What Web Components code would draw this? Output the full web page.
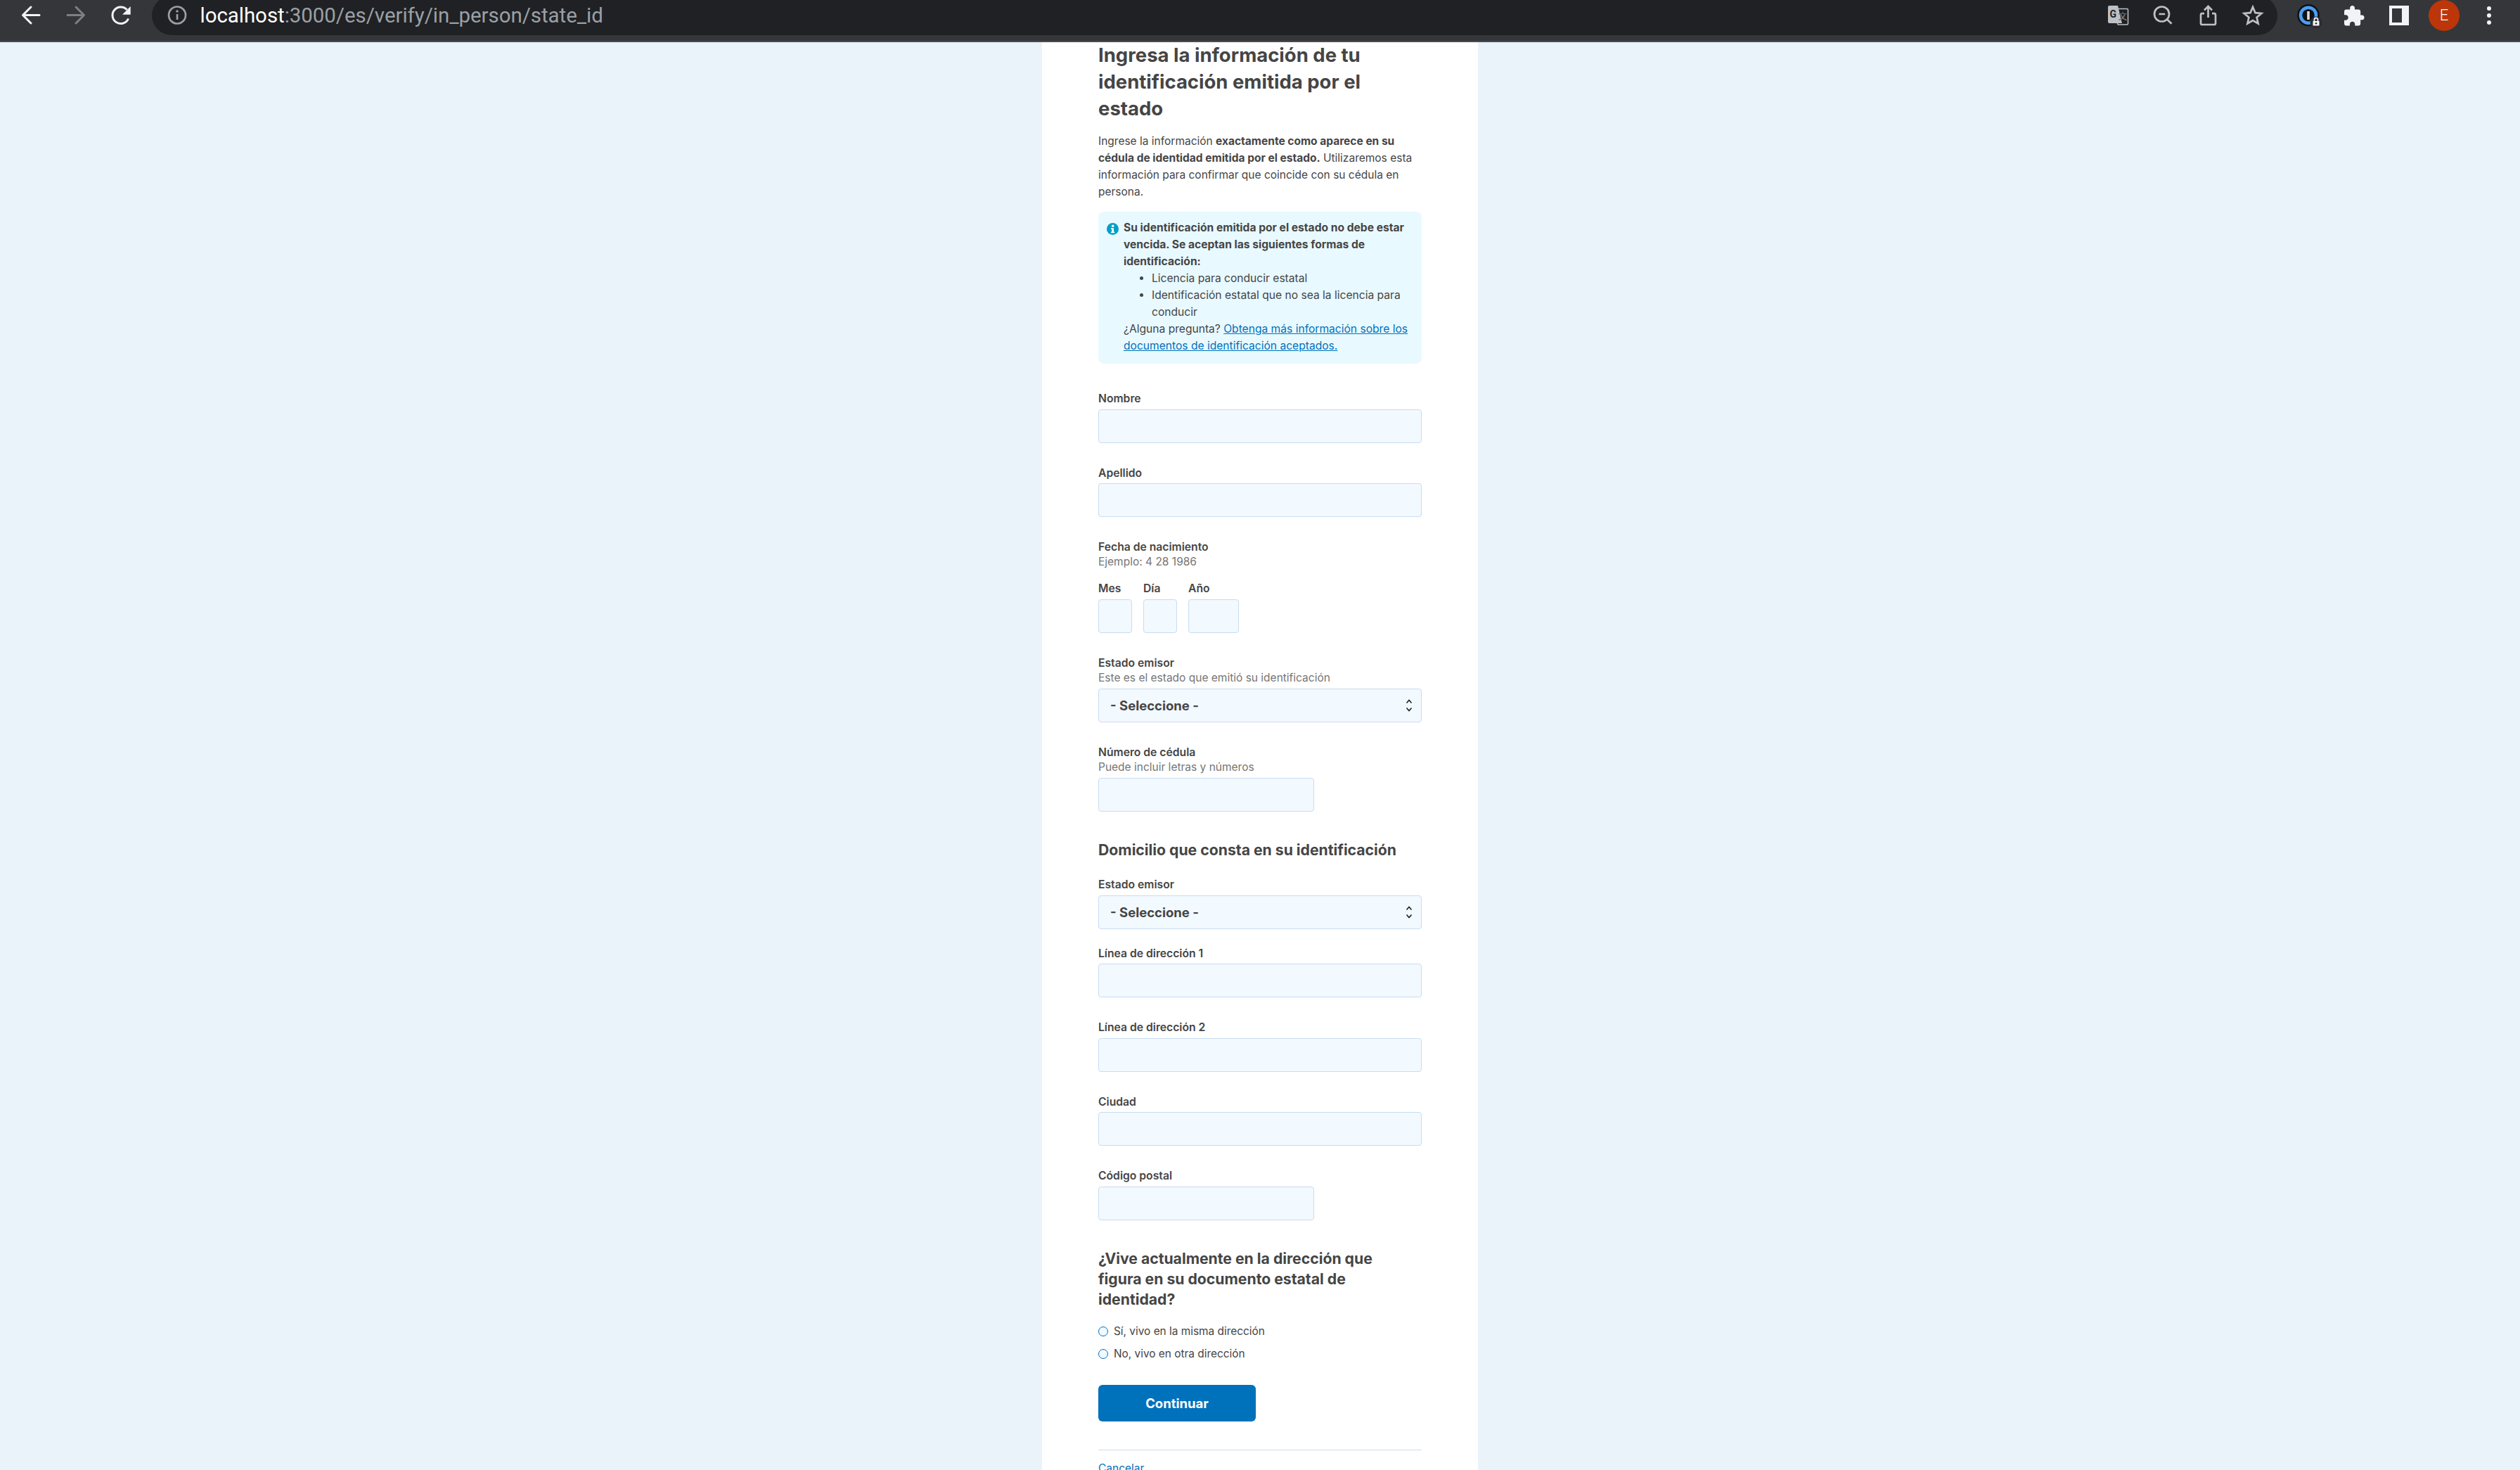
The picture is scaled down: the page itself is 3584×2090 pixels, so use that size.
<!DOCTYPE html>
<html lang="es">
<head>
<meta charset="utf-8">
<title>state_id</title>
<style>
  html, body { margin: 0; height: 2090px; overflow: hidden; }
  body { background: #eaf2fa; font-family: Inter, "Liberation Sans", sans-serif; color: #454545; }
</style>
</head>
<body>
<browser-bar url-host="localhost" url-path=":3000/es/verify/in_person/state_id"></browser-bar>
<id-page>
  <h-title>Ingresa la información de tu identificación emitida por el estado</h-title>
  <intro-text>Ingrese la información <b>exactamente como aparece en su cédula de identidad emitida por el estado.</b> Utilizaremos esta información para confirmar que coincide con su cédula en persona.</intro-text>
  <info-alert>
    <b>Su identificación emitida por el estado no debe estar vencida. Se aceptan las siguientes formas de identificación:</b>
    <ul style="margin:0;padding:0 0 0 40px">
      <li>Licencia para conducir estatal</li>
      <li>Identificación estatal que no sea la licencia para conducir</li>
    </ul>
    ¿Alguna pregunta? <a href="#" style="color:#0071bb">Obtenga más información sobre los documentos de identificación aceptados.</a>
  </info-alert>
  <form-field label="Nombre" style="margin-top:40px"></form-field>
  <form-field label="Apellido"></form-field>
  <date-field label="Fecha de nacimiento" hint="Ejemplo: 4 28 1986"></date-field>
  <form-field label="Estado emisor" hint="Este es el estado que emitió su identificación" kind="select"></form-field>
  <form-field label="Número de cédula" hint="Puede incluir letras y números" short></form-field>
  <section-title style="margin-top:40px">Domicilio que consta en su identificación</section-title>
  <form-field label="Estado emisor" kind="select" style="margin-top:25px"></form-field>
  <form-field label="Línea de dirección 1" style="margin-top:25px"></form-field>
  <form-field label="Línea de dirección 2"></form-field>
  <form-field label="Ciudad"></form-field>
  <form-field label="Código postal" short></form-field>
  <section-title style="margin-top:40px;max-width:440px">¿Vive actualmente en la dirección que figura en su documento estatal de identidad?</section-title>
  <radio-row style="margin-top:14px">Sí, vivo en la misma dirección</radio-row>
  <radio-row>No, vivo en otra dirección</radio-row>
  <main-button>Continuar</main-button>
  <page-footer>Cancelar</page-footer>
</id-page>

<script>
class BrowserBar extends HTMLElement {
  constructor() {
    super();
    this.attachShadow({ mode: "open" });
    const host = this.getAttribute("url-host");
    const path = this.getAttribute("url-path");
    this.shadowRoot.innerHTML = `
    <style>
      :host {
        display: flex;
        align-items: flex-start;
        height: 58px;
        background: #35363a;
        border-bottom: 2px solid #4b4c50;
        padding: 0 12px 0 11px;
        overflow: hidden;
      }
      .slot {
        width: 64px;
        height: 44px;
        flex: none;
        display: flex;
        align-items: center;
        justify-content: center;
      }
      svg { display: block; }
      .omni {
        flex: 1;
        height: 56px;
        margin: -6px 13px 0 13px;
        padding: 6px 3.5px 0 19px;
        box-sizing: border-box;
        border-radius: 28px;
        background: #202124;
        display: flex;
        align-items: flex-start;
      }
      .info { width: 34px; }
      .url {
        margin-left: 15.500px;
        height: 44px;
        font: 400 29.400px/44px Roboto, sans-serif;
        color: #9aa0a6;
        white-space: nowrap;
      }
      .url b { font-weight: 400; color: #fff; }
      .spacer { flex: 1; }
      .avatar {
        width: 44px;
        height: 44px;
        border-radius: 50%;
        background: #bc360a;
        color: #fff;
        font: 300 22px/44px Roboto, sans-serif;
        text-align: center;
      }
    </style>
    <div class="slot"><svg width="64" height="44" viewBox="0 0 64 44" fill="none" stroke="#f1f3f4" stroke-width="3" stroke-linecap="round" stroke-linejoin="round"><path d="M45 21.500H22M33 10 21.500 21.500 33 33"/></svg></div>
    <div class="slot"><svg width="64" height="44" viewBox="0 0 64 44" fill="none" stroke="#7e7f82" stroke-width="3" stroke-linecap="round" stroke-linejoin="round"><path d="M21 21.500h23M33 10l11.500 11.500L33 33"/></svg></div>
    <div class="slot"><svg width="64" height="44" viewBox="0 0 64 44" fill="none" stroke="#f1f3f4" stroke-width="3"><path d="M43.600 26.500A11.800 11.800 0 1 1 41.500 13.800"/><path d="M46.700 9v11.700H35z" fill="#f1f3f4" stroke="none"/></svg></div>
    <div class="omni">
      <div class="slot info"><svg width="30" height="30" viewBox="0 0 30 30" fill="none" stroke="#9aa0a6" stroke-width="2.700"><circle cx="15" cy="14.500" r="12"/><path d="M15 13v8"/><circle cx="15" cy="9" r="1.800" fill="#9aa0a6" stroke="none"/></svg></div>
      <div class="url"><b>${host}</b>${path}</div>
      <div class="spacer"></div>
      <div class="slot"><svg width="64" height="44" viewBox="0 0 64 44"><rect x="31.500" y="12.500" width="15" height="22.500" rx="1.500" fill="none" stroke="#bdc1c6" stroke-width="1.500"/><path d="M20 8h12l6 25H20a2 2 0 0 1-2-2V10a2 2 0 0 1 2-2z" fill="#bdc1c6"/><text x="20.500" y="25" font-family="Roboto" font-weight="700" font-size="14" fill="#202124">G</text><text x="33" y="28" font-family="Noto Sans CJK SC" font-size="12" fill="#bdc1c6" stroke="#202124" stroke-width=".3">文</text></svg></div>
      <div class="slot"><svg width="64" height="44" viewBox="0 0 64 44" fill="none" stroke="#bdc1c6" stroke-width="2.700"><circle cx="30.500" cy="20" r="10.500"/><path d="M26.500 20h8.700M38.300 27.800l6.200 5.900"/></svg></div>
      <div class="slot"><svg width="64" height="44" viewBox="0 0 64 44" fill="none" stroke="#bdc1c6" stroke-width="2.700"><path d="M32.500 25V9.500M27 14.500l5.500-5.500 5.500 5.500M27 19.200h-3a2 2 0 0 0-2 2V33a2 2 0 0 0 2 2h17a2 2 0 0 0 2-2V21.200a2 2 0 0 0-2-2h-3"/></svg></div>
      <div class="slot"><svg width="64" height="44" viewBox="0 0 64 44" fill="none" stroke="#bdc1c6" stroke-width="2.700"><path d="M32 10l3.500 8.200 8.900.8-6.800 5.800 2 8.700L32 29l-7.600 4.500 2-8.700-6.800-5.800 8.900-.8z"/></svg></div>
    </div>
    <div class="slot"><svg width="64" height="44" viewBox="0 0 64 44"><circle cx="31" cy="21.700" r="15.700" fill="#101114"/><circle cx="31" cy="21.700" r="11" fill="none" stroke="#4a9ff5" stroke-width="4.500"/><rect x="29.200" y="16" width="3.600" height="12" fill="#dcdcdc"/><circle cx="42" cy="32" r="8.500" fill="#2b2c2f"/><path d="M37.500 30h9v6.500h-9z" fill="#f1f3f4"/><path d="M39.500 30v-2a2.500 2.500 0 0 1 5 0v2" fill="none" stroke="#f1f3f4" stroke-width="1.800"/><circle cx="42" cy="33.200" r="1.300" fill="#2b2c2f"/></svg></div>
    <div class="slot"><svg width="64" height="44" viewBox="0 0 64 44"><path transform="translate(15.300 6.600) scale(1.360)" fill="#f1f3f4" d="M20.500 11H19V7c0-1.100-.9-2-2-2h-4V3.500C13 2.120 11.880 1 10.500 1S8 2.120 8 3.500V5H4c-1.100 0-1.990.9-1.990 2v3.800H3.500c1.490 0 2.700 1.210 2.700 2.700s-1.210 2.700-2.700 2.700H2V20c0 1.100.9 2 2 2h3.800v-1.500c0-1.490 1.210-2.700 2.700-2.700 1.490 0 2.700 1.210 2.700 2.700V22H17c1.100 0 2-.9 2-2v-4h1.500c1.380 0 2.500-1.120 2.500-2.500S21.880 11 20.500 11z"/></svg></div>
    <div class="slot"><svg width="28" height="28" viewBox="0 0 28 28"><path d="M0 0h28v28H0zM4 4v20h14V4z" fill="#f1f3f4" fill-rule="evenodd"/></svg></div>
    <div class="slot"><div class="avatar">E</div></div>
    <div class="slot"><svg width="6" height="26" viewBox="0 0 6 26" fill="#f1f3f4"><circle cx="3" cy="3" r="3"/><circle cx="3" cy="13" r="3"/><circle cx="3" cy="23" r="3"/></svg></div>
    `;
  }
}

class IdPage extends HTMLElement {
  constructor() {
    super();
    this.attachShadow({ mode: "open" });
    this.shadowRoot.innerHTML = `
    <style>
      :host {
        display: block;
        box-sizing: border-box;
        width: 620px;
        height: 2030px;
        margin: 0 auto;
        padding: 0 80px;
        background: #fff;
        overflow: hidden;
      }
    </style>
    <slot></slot>
    `;
  }
}

class HTitle extends HTMLElement {
  constructor() {
    super();
    this.attachShadow({ mode: "open" });
    this.shadowRoot.innerHTML = `
    <style>
      :host {
        display: block;
        font: 700 27.500px/38px Inter, sans-serif;
        color: #454545;
        margin-top: -1px;
        max-width: 400px;
      }
    </style>
    <slot></slot>
    `;
  }
}

class IntroText extends HTMLElement {
  constructor() {
    super();
    this.attachShadow({ mode: "open" });
    this.shadowRoot.innerHTML = `
    <style>
      :host {
        display: block;
        font: 400 15.500px/24px Inter, sans-serif;
        margin-top: 16px;
        color: #454545;
      }
    </style>
    <slot></slot>
    `;
  }
}

class InfoAlert extends HTMLElement {
  constructor() {
    super();
    this.attachShadow({ mode: "open" });
    this.shadowRoot.innerHTML = `
    <style>
      :host {
        display: block;
        margin-top: 16px;
        padding: 11px 8px 13px 36px;
        background: #e8f9ff;
        border-radius: 8px;
        position: relative;
        font: 400 15.600px/24px Inter, sans-serif;
        color: #454545;
      }
      svg { position: absolute; left: 12px; top: 16px; }
    </style>
    <svg width="17" height="17" viewBox="0 0 17 17"><circle cx="8.500" cy="8.500" r="8.500" fill="#00a0c6"/><circle cx="8.700" cy="4.300" r="1.800" fill="#fff"/><path d="M6 7.300h4v5.200h1.200v1.700H6v-1.700h1.300V9H6z" fill="#fff"/></svg>
    <slot></slot>
    `;
  }
}

class FormField extends HTMLElement {
  constructor() {
    super();
    this.attachShadow({ mode: "open" });
    const label = this.getAttribute("label");
    const hint = this.getAttribute("hint");
    const isSelect = this.getAttribute("kind") === "select";
    const control = isSelect
      ? `<div class="sel"><select><option>- Seleccione -</option></select>
         <svg width="10" height="18" viewBox="0 0 10 18" fill="none" stroke="#1b1b1b" stroke-width="1.500"><path d="M1.500 5.500 5 1.500l3.500 4M1.500 12.500 5 16.500l3.500-4"/></svg></div>`
      : `<input type="text">`;
    this.shadowRoot.innerHTML = `
    <style>
      :host { display: block; margin-top: 33px; }
      label {
        display: block;
        font: 600 15.700px/20px Inter, sans-serif;
        color: #454545;
      }
      .hint {
        font: 400 15.500px/20px Inter, sans-serif;
        color: #767676;
        margin: 1px 0 5px;
      }
      .nohint { height: 4.500px; }
      input, select {
        display: block;
        box-sizing: border-box;
        width: 100%;
        height: 48px;
        margin: 0;
        background: #f2f9ff;
        border: 1px solid #c9dcf0;
        border-radius: 4px;
        outline: none;
      }
      :host([short]) input { width: 307px; }
      select {
        appearance: none;
        padding: 0 0 0 16px;
        font: 700 18.500px Inter, sans-serif;
        color: #454545;
      }
      .sel { position: relative; }
      .sel svg { position: absolute; right: 13px; top: 15px; }
    </style>
    <label>${label}</label>
    ${hint ? `<div class="hint">${hint}</div>` : `<div class="nohint"></div>`}
    ${control}
    `;
  }
}

class DateField extends HTMLElement {
  constructor() {
    super();
    this.attachShadow({ mode: "open" });
    const parts = [["Mes", 48], ["Día", 48], ["Año", 72]];
    this.shadowRoot.innerHTML = `
    <style>
      :host { display: block; margin-top: 33px; }
      .lab {
        font: 600 15.700px/20px Inter, sans-serif;
        color: #454545;
      }
      .hint {
        font: 400 15.500px/20px Inter, sans-serif;
        color: #767676;
        margin-top: 1px;
      }
      .row { display: flex; gap: 16px; margin-top: 18px; }
      input {
        display: block;
        box-sizing: border-box;
        height: 48px;
        margin: 5px 0 0;
        background: #f2f9ff;
        border: 1px solid #c9dcf0;
        border-radius: 4px;
        outline: none;
      }
    </style>
    <div class="lab">${this.getAttribute("label")}</div>
    <div class="hint">${this.getAttribute("hint")}</div>
    <div class="row">
      ${parts.map(([name, w]) => `<div><div class="lab">${name}</div><input style="width:${w}px"></div>`).join("")}
    </div>
    `;
  }
}

class SectionTitle extends HTMLElement {
  constructor() {
    super();
    this.attachShadow({ mode: "open" });
    this.shadowRoot.innerHTML = `
    <style>
      :host {
        display: block;
        font: 700 21.200px/29.300px Inter, sans-serif;
        color: #454545;
      }
    </style>
    <slot></slot>
    `;
  }
}

class RadioRow extends HTMLElement {
  constructor() {
    super();
    this.attachShadow({ mode: "open" });
    this.shadowRoot.innerHTML = `
    <style>
      :host {
        display: flex;
        align-items: center;
        gap: 8px;
        height: 32px;
        font: 400 15.400px/32px Inter, sans-serif;
        color: #454545;
      }
      input {
        appearance: none;
        box-sizing: border-box;
        width: 14px;
        height: 14px;
        margin: 0;
        background: #f2f9ff;
        border: 1.500px solid #0071bb;
        border-radius: 50%;
      }
    </style>
    <input type="radio"><span><slot></slot></span>
    `;
  }
}

class MainButton extends HTMLElement {
  constructor() {
    super();
    this.attachShadow({ mode: "open" });
    this.shadowRoot.innerHTML = `
    <style>
      :host { display: block; margin-top: 28px; }
      button {
        display: block;
        width: 224px;
        height: 52px;
        border: 0;
        border-radius: 6px;
        background: #0071bb;
        color: #fff;
        font: 700 18.500px Inter, sans-serif;
      }
    </style>
    <button><slot></slot></button>
    `;
  }
}

class PageFooter extends HTMLElement {
  constructor() {
    super();
    this.attachShadow({ mode: "open" });
    this.shadowRoot.innerHTML = `
    <style>
      :host {
        display: block;
        margin-top: 40px;
        padding-top: 14px;
        border-top: 1px solid #cfdceb;
        font: 400 15.500px/24px Inter, sans-serif;
      }
      a { color: #0071bb; }
    </style>
    <a href="#"><slot></slot></a>
    `;
  }
}

customElements.define("browser-bar", BrowserBar);
customElements.define("id-page", IdPage);
customElements.define("h-title", HTitle);
customElements.define("intro-text", IntroText);
customElements.define("info-alert", InfoAlert);
customElements.define("form-field", FormField);
customElements.define("date-field", DateField);
customElements.define("section-title", SectionTitle);
customElements.define("radio-row", RadioRow);
customElements.define("main-button", MainButton);
customElements.define("page-footer", PageFooter);
</script>
</body>
</html>
